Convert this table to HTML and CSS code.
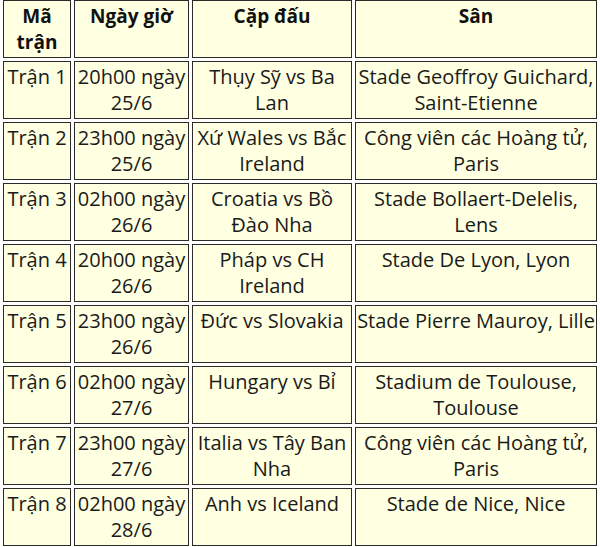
FILE: index.html
```html
<!DOCTYPE html>
<html lang="vi">
<head>
<meta charset="utf-8">
<title>Lịch thi đấu</title>
<link rel="stylesheet" href="styles.css">
</head>
<body>
<table class="schedule">
  <colgroup>
    <col class="c1"><col class="c2"><col class="c3"><col class="c4">
  </colgroup>
  <thead>
    <tr><th>Mã trận</th><th>Ngày giờ</th><th>Cặp đấu</th><th>Sân</th></tr>
  </thead>
  <tbody>
    <tr><td>Trận 1</td><td>20h00 ngày 25/6</td><td>Thụy Sỹ vs Ba Lan</td><td>Stade Geoffroy Guichard, Saint-Etienne</td></tr>
    <tr><td>Trận 2</td><td>23h00 ngày 25/6</td><td>Xứ Wales vs Bắc Ireland</td><td>Công viên các Hoàng tử, Paris</td></tr>
    <tr><td>Trận 3</td><td>02h00 ngày 26/6</td><td>Croatia vs Bồ Đào Nha</td><td>Stade Bollaert-Delelis, Lens</td></tr>
    <tr><td>Trận 4</td><td>20h00 ngày 26/6</td><td>Pháp vs CH Ireland</td><td>Stade De Lyon, Lyon</td></tr>
    <tr><td>Trận 5</td><td>23h00 ngày 26/6</td><td>Đức vs Slovakia</td><td>Stade Pierre Mauroy, Lille</td></tr>
    <tr><td>Trận 6</td><td>02h00 ngày 27/6</td><td>Hungary vs Bỉ</td><td>Stadium de Toulouse, Toulouse</td></tr>
    <tr><td>Trận 7</td><td>23h00 ngày 27/6</td><td>Italia vs Tây Ban Nha</td><td>Công viên các Hoàng tử, Paris</td></tr>
    <tr><td>Trận 8</td><td>02h00 ngày 28/6</td><td>Anh vs Iceland</td><td>Stade de Nice, Nice</td></tr>
  </tbody>
</table>
</body>
</html>
```
FILE: styles.css
```css
html, body {
  margin: 0;
  padding: 0;
  background: #ffffff;
}
.schedule {
  width: 600px;
  margin-top: -3px;
  border-collapse: separate;
  border-spacing: 3px;
  table-layout: fixed;
  font-family: "Open Sans", "Noto Sans", sans-serif;
  font-size: 20px;
  line-height: 26px;
  color: #1a1a1a;
}
.c1 { width: 68px; }
.c2 { width: 115px; }
.c3 { width: 160px; }
.c4 { width: 242px; }
.schedule th,
.schedule td {
  background: #ffffe1;
  border: 1px solid #2a2a2a;
  padding: 2px 0;
  text-align: center;
  vertical-align: top;
}
.schedule th {
  font-size: 19px;
  font-weight: bold;
  color: #111111;
}
```
